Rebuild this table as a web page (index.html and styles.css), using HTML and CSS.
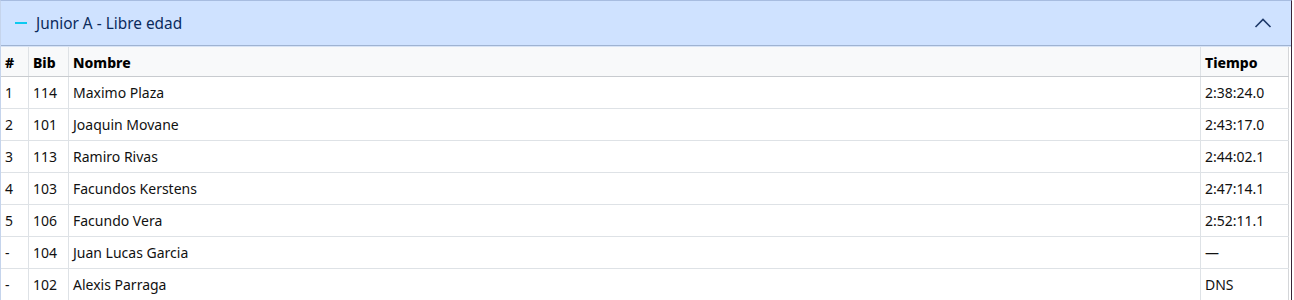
FILE: index.html
```html
<!DOCTYPE html>
<html>
<head>
<meta charset="utf-8">
<link rel="stylesheet" href="styles.css">
</head>
<body>
<div class="accordion">
  <div class="acc-header">
    <span class="dash"></span>
    <span class="title">Junior A - Libre edad</span>
    <svg class="chev" width="18" height="12" viewBox="0 0 18 12"><path d="M1.5 10 L9 2.5 L16.5 10" fill="none" stroke="#1f3a6a" stroke-width="1.6"/></svg>
  </div>
  <div class="acc-body">
    <table class="results">
      <thead>
        <tr><th class="c-pos">#</th><th class="c-bib">Bib</th><th>Nombre</th><th class="c-time">Tiempo</th></tr>
      </thead>
      <tbody>
        <tr><td>1</td><td>114</td><td>Maximo Plaza</td><td>2:38:24.0</td></tr>
        <tr><td>2</td><td>101</td><td>Joaquin Movane</td><td>2:43:17.0</td></tr>
        <tr><td>3</td><td>113</td><td>Ramiro Rivas</td><td>2:44:02.1</td></tr>
        <tr><td>4</td><td>103</td><td>Facundos Kerstens</td><td>2:47:14.1</td></tr>
        <tr><td>5</td><td>106</td><td>Facundo Vera</td><td>2:52:11.1</td></tr>
        <tr><td>-</td><td>104</td><td>Juan Lucas Garcia</td><td>—</td></tr>
        <tr><td>-</td><td>102</td><td>Alexis Parraga</td><td>DNS</td></tr>
      </tbody>
    </table>
  </div>
</div>
</body>
</html>
```
FILE: styles.css
```css
html, body {
  margin: 0;
  padding: 0;
  background: #ffffff;
}
body {
  font-family: "Noto Sans", "Open Sans", sans-serif;
  color: #212529;
}
.accordion {
  width: 1292px;
  border-right: 1px solid #3a2438;
  border-top: 1px solid #a7bce0;
  border-left: 1px solid #c5d4ec;
  box-sizing: border-box;
}
.acc-header {
  height: 44px;
  background: #cfe2ff;
  display: flex;
  align-items: center;
  padding: 0 19px 0 14px;
  border-bottom: 1px solid #9fb3d2;
  box-shadow: 0 1px 0 #d8e4f6;
}
.dash {
  width: 12px;
  height: 2px;
  background: #0dcaf0;
  margin-right: 9px;
}
.title {
  font-size: 15.4px;
  color: #0a2a5c;
  flex: 1;
}
.chev {
  display: block;
}
.acc-body {
  padding-top: 1px;
  padding-right: 2px;
}
.results {
  width: 100%;
  border-collapse: collapse;
  font-size: 14px;
}
.results th, .results td {
  text-align: left;
  padding: 0 4px;
  border-bottom: 1px solid #dee2e6;
  border-right: 1px solid #dee2e6;
  height: 31px;
  white-space: nowrap;
}
.results th {
  background: #f8f9fa;
  font-weight: 800;
  color: #000;
  height: 28px;
  padding-top: 1px;
  padding-bottom: 0;
  border-bottom-color: #c8cbcf;
}
.results th:last-child, .results td:last-child {
  border-right: 1px solid #d4d6d9;
}
.results td {
  color: #111;
}
.c-pos { width: 19px; }
.c-bib { width: 31px; }
.c-time { width: 79px; }
```
